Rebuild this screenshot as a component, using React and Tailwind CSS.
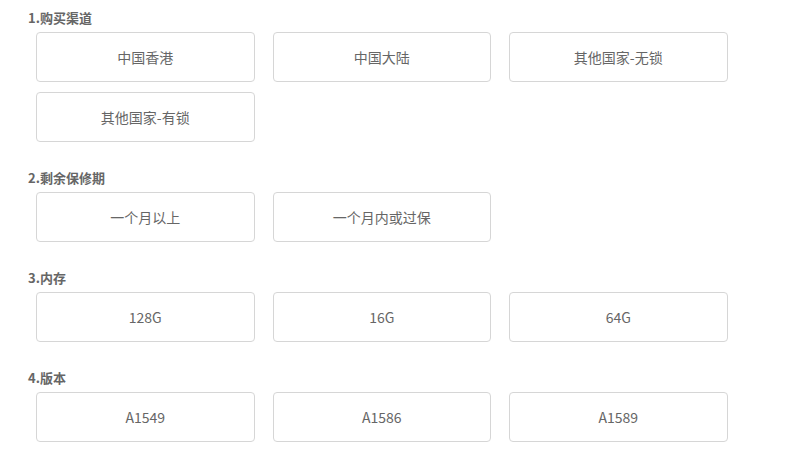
import React, { useState } from 'react';

const sections = [
  { title: '1.购买渠道', options: ['中国香港', '中国大陆', '其他国家-无锁', '其他国家-有锁'] },
  { title: '2.剩余保修期', options: ['一个月以上', '一个月内或过保'] },
  { title: '3.内存', options: ['128G', '16G', '64G'] },
  { title: '4.版本', options: ['A1549', 'A1586', 'A1589'] },
];

const App = () => {
  const [selected, setSelected] = useState({});

  return (
    <div
      className="min-h-screen bg-white pl-[28px] pt-[8px]"
      style={{ fontFamily: '"Microsoft YaHei", "Noto Sans CJK SC", "Noto Sans", sans-serif' }}
    >
      {sections.map((section, i) => (
        <div key={section.title} className="mb-[26px]">
          <h3 className="h-[20px] text-[13px] font-bold leading-[20px] text-[#666]">{section.title}</h3>
          <div className="mt-[4px] ml-[8px] grid w-[694px] grid-cols-[218.5px_218.5px_218.5px] gap-x-[18px] gap-y-[10px]">
            {section.options.map((opt) => (
              <button
                key={opt}
                onClick={() => setSelected((prev) => ({ ...prev, [i]: opt }))}
                className={
                  'h-[50px] rounded-[4px] border bg-white text-[14px] text-[#666] ' +
                  (selected[i] === opt ? 'border-[#f60]' : 'border-[#d6d6d6]')
                }
              >
                {opt}
              </button>
            ))}
          </div>
        </div>
      ))}
    </div>
  );
};

export default App;
